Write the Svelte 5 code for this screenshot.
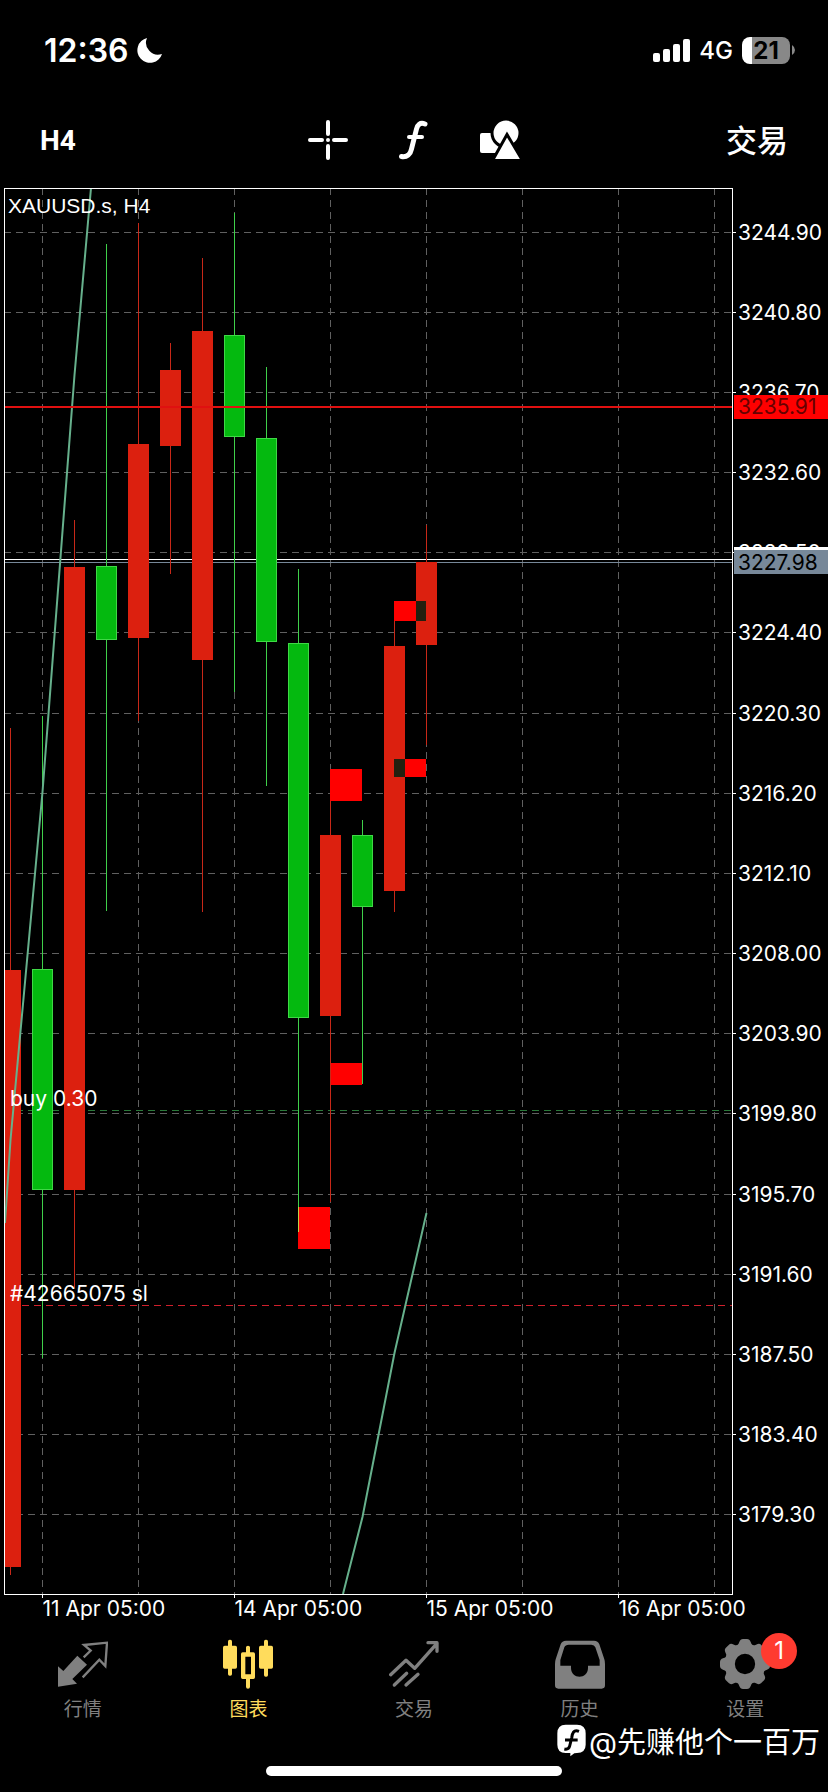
<script>
  const W = 828, H = 1450;
  const plot = { left: 4, right: 732, top: 8, bottom: 1414 };
  const bodyW = 21;

  const prices = Array.from({ length: 17 }, (_, i) => ({
    label: (3244.9 - i * 4.1).toFixed(2),
    y: Math.floor(52 + i * 80.17) + 0.5
  }));

  const times = [
    { x: 42.5, label: '11 Apr 05:00' },
    { x: 138.5 },
    { x: 234.5, label: '14 Apr 05:00' },
    { x: 330.5 },
    { x: 426.5, label: '15 Apr 05:00' },
    { x: 522.5 },
    { x: 618.5, label: '16 Apr 05:00' },
    { x: 714.5 }
  ];

  // wick top, body top, body bottom, wick bottom
  const candles = [
    { up: false, y: [548, 790, 1387, 1395] },
    { up: true, y: [536, 789, 1010, 1178] },
    { up: false, y: [340, 387, 1010, 1108] },
    { up: true, y: [64, 386, 460, 731] },
    { up: false, y: [43, 264, 458, 541] },
    { up: false, y: [163, 190, 266, 394] },
    { up: false, y: [78, 151, 480, 732] },
    { up: true, y: [33, 155, 257, 512] },
    { up: true, y: [187, 258, 462, 606] },
    { up: true, y: [389, 463, 838, 1052] },
    { up: false, y: [621, 655, 836, 1022] },
    { up: true, y: [640, 655, 727, 904] },
    { up: false, y: [441, 466, 711, 732] },
    { up: false, y: [345, 382, 465, 565] }
  ];

  const zones = [
    { x: 394, y: 421, w: 32, h: 20 },
    { x: 394, y: 579, w: 32, h: 18 },
    { x: 330, y: 589, w: 32, h: 32 },
    { x: 331, y: 883, w: 31, h: 22 },
    { x: 298, y: 1027, w: 32, h: 42 }
  ];

  const tabs = [
    { id: 'quotes', label: '行情' },
    { id: 'chart', label: '图表' },
    { id: 'trade', label: '交易' },
    { id: 'history', label: '历史' },
    { id: 'settings', label: '设置', badge: 1 }
  ];

  let active = $state('chart');

  function candleX(i) {
    return 10.5 + i * 32;
  }

  const teeth = [0, 45, 90, 135, 180, 225, 270, 315];
</script>

<main class="app">
  <header class="status">
    <div class="clock">
      <span>12:36</span>
      <svg width="26" height="26" viewBox="0 0 26 26" aria-hidden="true">
        <path d="M10 1A12.6 12.6 0 1 0 25 17A12 12 0 0 1 10 1Z" fill="#fff" />
      </svg>
    </div>
    <div class="signal">
      <svg width="38" height="24" viewBox="0 0 38 24" fill="#fff" aria-hidden="true">
        <rect x="0" y="15" width="7" height="9" rx="2" />
        <rect x="10" y="11" width="7" height="13" rx="2" />
        <rect x="20" y="6" width="7" height="18" rx="2" />
        <rect x="30" y="1" width="7" height="23" rx="2" />
      </svg>
      <span class="network">4G</span>
      <div class="battery"><span>21</span></div>
      <svg class="nub" width="3" height="10" viewBox="0 0 3 10" aria-hidden="true">
        <path d="M0 0Q3 2 3 5Q3 8 0 10Z" fill="#888" />
      </svg>
    </div>
  </header>

  <div class="toolbar">
    <button class="period">H4</button>
    <div class="tools">
      <button aria-label="十字光标">
        <svg width="40" height="40" viewBox="0 0 40 40" stroke="#fff" stroke-width="4" stroke-linecap="round" aria-hidden="true">
          <path d="M2 20H14M26 20H38M20 2V14M20 26V38" />
          <circle cx="20" cy="20" r="2" fill="#fff" stroke="none" />
        </svg>
      </button>
      <button aria-label="指标">
        <svg width="40" height="40" viewBox="0 0 40 40" fill="none" stroke="#fff" stroke-width="5" stroke-linecap="round" aria-hidden="true">
          <path d="M31 4C26 2 23.500 5 22.500 9L17.500 29C16.500 34 13 37.500 7.500 36.500" />
          <path d="M15 17H28" stroke-width="4" />
        </svg>
      </button>
      <button aria-label="图形">
        <svg width="40" height="40" viewBox="0 0 40 40" fill="#fff" aria-hidden="true">
          <rect x="0" y="13" width="20" height="20" rx="2" />
          <circle cx="26" cy="13" r="14" stroke="#000" stroke-width="3" />
          <path d="M27 14.500L12.500 40.500H42.500Z" stroke="#000" stroke-width="3" />
        </svg>
      </button>
    </div>
    <button class="order">交易</button>
  </div>

  <svg class="chart" viewBox="0 0 {W} {H}" role="img" aria-label="XAUUSD.s, H4">
    <clipPath id="plot-area">
      <rect x={plot.left} y={plot.top} width={plot.right - plot.left} height={plot.bottom - plot.top} />
    </clipPath>

    <g class="grid">
      {#each prices as p}
        <line x1={plot.left} y1={p.y} x2={plot.right} y2={p.y} />
      {/each}
      {#each times as t}
        <line x1={t.x} y1={plot.top} x2={t.x} y2={plot.bottom} />
      {/each}
    </g>

    <line class="level buy" x1="10" y1="930.500" x2={plot.right} y2="930.500" />
    <line class="level stop" x1="10" y1="1125.500" x2={plot.right} y2="1125.500" />
    <line x1={plot.left} y1="379.500" x2={plot.right} y2="379.500" stroke="#fff" />
    <line x1={plot.left} y1="382.500" x2={plot.right} y2="382.500" stroke="#778899" />

    <g clip-path="url(#plot-area)">
      {#each candles as c, i}
        <g class={c.up ? 'up' : 'down'}>
          <line x1={candleX(i)} y1={c.y[0]} x2={candleX(i)} y2={c.y[3]} />
          <rect
            x={candleX(i) - bodyW / 2 + 0.5}
            y={c.y[1] + 0.5}
            width={bodyW - 1}
            height={c.y[2] - c.y[1] - 1}
          />
        </g>
      {/each}
      {#each zones as z}
        <rect class="zone" x={z.x} y={z.y} width={z.w} height={z.h} />
      {/each}
      <polyline class="ma" points="5,1043 10.500,960 42.500,612 74.500,195 91,8" />
      <polyline class="ma" points="343,1414 362.500,1337 394.500,1173 426.500,1033" />
      <rect class="ask" x={plot.left} y="226" width={plot.right - plot.left} height="2" />
    </g>

    <rect class="frame" x="4.500" y="8.500" width="728" height="1406" />

    {#each prices as p}
      <line x1={plot.right} y1={p.y} x2={plot.right + 4} y2={p.y} stroke="#fff" />
      <text x="738" y={p.y + 7}>{p.label}</text>
    {/each}
    {#each times as t}
      {#if t.label}
        <line x1={t.x} y1={plot.bottom} x2={t.x} y2={plot.bottom + 4} stroke="#fff" />
        <text x={t.x} y="1436">{t.label}</text>
      {/if}
    {/each}

    <rect x="734" y="215" width="94" height="24" fill="#f00" />
    <text x="738" y="234" class="ask-price">3235.91</text>
    <rect x="734" y="367" width="94" height="24" fill="#fff" />
    <rect x="734" y="370" width="94" height="24" fill="#778899" />
    <text x="738" y="390" class="bid-price">3227.98</text>

    <text class="symbol" x="8" y="33">XAUUSD.s, H4</text>
    <text x="10" y="926">buy 0.30</text>
    <text x="10" y="1121">#42665075 sl</text>
  </svg>

  <nav class="tabs">
    {#each tabs as tab}
      <button class:active={active === tab.id} onclick={() => (active = tab.id)}>
        <span class="icon">
          {#if tab.id === 'quotes'}
            <svg viewBox="174 175 150 150" aria-hidden="true">
              <path d="M174 257L190 271L232 225L261 252L217 295L231 309L174 318Z" fill="currentColor" />
              <path d="M251 230L272 210L252 193L321 186L316 256L298 237L248 290" fill="none" stroke="currentColor" stroke-width="7" />
            </svg>
          {:else if tab.id === 'chart'}
            <svg viewBox="672 175 150 150" fill="currentColor" aria-hidden="true">
              <rect x="672" y="195" width="42" height="69" rx="5" />
              <rect x="687" y="177" width="12" height="108" rx="5" />
              <path d="M741 215V200Q741 195 747 195Q753 195 753 200V215H763Q768 215 768 220V290Q768 295 763 295H753V318Q753 324 747 324Q741 324 741 318V295H731Q726 295 726 290V220Q726 215 731 215ZM739 228V281H756V228Z" fill-rule="evenodd" />
              <rect x="780" y="195" width="42" height="69" rx="5" />
              <rect x="795" y="177" width="12" height="111" rx="5" />
            </svg>
          {:else if tab.id === 'trade'}
            <svg viewBox="1165 175 150 150" fill="none" stroke="currentColor" stroke-width="10" stroke-linecap="round" stroke-linejoin="round" aria-hidden="true">
              <path d="M1170 282L1216 239L1242 263L1309 188M1282 186H1309V212" />
              <path d="M1181 313L1218 278M1216 313L1252 281" />
            </svg>
          {:else if tab.id === 'history'}
            <svg viewBox="420 175 150 150" aria-hidden="true">
              <path d="M453 180H537Q549 180 553 191L568 236Q570 242 570 250V314Q570 324 560 324H430Q420 324 420 314V250Q420 242 422 236L437 191Q441 180 453 180ZM461 192Q451 192 448 200L436 238V255H468V262C468 297 519 297 519 262V255H554V238L541 200Q538 192 529 192Z" fill="currentColor" fill-rule="evenodd" />
            </svg>
          {:else}
            <svg viewBox="-75 -75 150 150" aria-hidden="true">
              <circle r="46" fill="none" stroke="currentColor" stroke-width="31" />
              {#each teeth as a}
                <path d="M-25 -54Q-19 -58 -17 -66Q-14 -75 -6 -75H6Q14 -75 17 -66Q19 -58 25 -54Z" fill="currentColor" transform="rotate({a})" />
              {/each}
            </svg>
          {/if}
          {#if tab.badge}<span class="badge">{tab.badge}</span>{/if}
        </span>
        <span class="label">{tab.label}</span>
      </button>
    {/each}
  </nav>

  <footer>
    <div class="author">
      <svg width="29" height="33" viewBox="0 0 87 99" aria-hidden="true">
        <path d="M26 2H60Q86 2 86 28V62Q86 86 60 87L52 88L40 97V87H26Q1 87 1 62V28Q1 2 26 2Z" fill="#fff" />
        <path d="M66 22C50 16 46 26 44 42L38 66Q35 78 22 75M24 48H62" fill="none" stroke="#000" stroke-width="9" />
      </svg>
      <span>@先赚他个一百万</span>
    </div>
    <div class="home"></div>
  </footer>
</main>

<style>
  :global(body) {
    background: #000;
  }
  .app {
    background: #000;
    color: #fff;
    font-family: Inter, "Noto Sans CJK SC", sans-serif;
    overflow: hidden;
  }
  button {
    background: none;
    border: 0;
    padding: 0;
    color: inherit;
    font: inherit;
    cursor: pointer;
  }
  svg {
    display: block;
  }
  .status {
    display: flex;
    align-items: center;
    justify-content: space-between;
    height: 100px;
    padding: 0 33px 0 44px;
  }
  .clock {
    display: flex;
    align-items: center;
    gap: 8px;
    font-size: 32px;
    font-weight: 600;
  }
  .signal {
    display: flex;
    align-items: center;
  }
  .network {
    margin: 0 9px 0 8px;
    font-size: 24px;
    font-weight: 500;
  }
  .battery {
    width: 48px;
    height: 27px;
    border-radius: 8px;
    background: linear-gradient(to right, #fff 10px, #888 10px);
    color: #000;
    font-size: 24px;
    font-weight: 700;
    line-height: 27px;
    text-align: center;
  }
  .nub {
    margin-left: 2px;
  }
  .toolbar {
    display: grid;
    grid-template-columns: 1fr auto 1fr;
    align-items: center;
    height: 80px;
    padding: 0 40px;
  }
  .period {
    justify-self: start;
    font: bold 28px Roboto, sans-serif;
  }
  .tools {
    display: flex;
    gap: 46px;
  }
  .order {
    justify-self: end;
    padding-bottom: 4px;
    font-size: 31px;
    font-weight: 500;
  }
  .chart {
    width: 100%;
    height: auto;
  }
  .chart text {
    fill: #fff;
    font-size: 21px;
  }
  .chart .symbol {
    font-family: "Liberation Sans", Arial, sans-serif;
  }
  .chart .ask-price {
    fill: #600;
  }
  .chart .bid-price {
    fill: #000;
  }
  .grid line {
    stroke: #606060;
    stroke-dasharray: 7 5;
  }
  .level {
    stroke-dasharray: 7 5;
  }
  .buy {
    stroke: #2a7a3a;
    stroke-dashoffset: 6;
  }
  .stop {
    stroke: #d0202c;
  }
  .up line {
    stroke: #3fd04a;
  }
  .up rect {
    fill: #04b90f;
    stroke: #3fd846;
  }
  .down line {
    stroke: #c82818;
  }
  .down rect {
    fill: #dc200f;
    stroke: #dc200f;
  }
  .zone {
    fill: #f00;
    mix-blend-mode: difference;
  }
  .ma {
    fill: none;
    stroke: #66b08c;
    stroke-width: 2;
  }
  .ask {
    fill: #e01010;
  }
  .frame {
    fill: none;
    stroke: #fff;
  }
  .tabs {
    display: grid;
    grid-template-columns: repeat(5, 1fr);
    padding-top: 9px;
    color: #808080;
  }
  .tabs button {
    display: flex;
    flex-direction: column;
    align-items: center;
    gap: 9px;
  }
  .tabs .active {
    color: #ffdc5c;
  }
  .icon {
    position: relative;
    width: 50px;
    height: 50px;
  }
  .badge {
    position: absolute;
    top: -6px;
    left: 41px;
    width: 36px;
    height: 36px;
    border-radius: 50%;
    background: #ff3b30;
    color: #fff;
    font-size: 24px;
    line-height: 36px;
    text-align: center;
  }
  .label {
    font-size: 19px;
    line-height: 24px;
  }
  footer {
    display: flex;
    flex-direction: column;
    gap: 8px;
    padding-bottom: 16px;
  }
  .author {
    display: flex;
    align-items: center;
    justify-content: flex-end;
    gap: 3px;
    height: 36px;
    padding-right: 8px;
    font-size: 29px;
  }
  .home {
    align-self: center;
    width: 296px;
    height: 10px;
    border-radius: 5px;
    background: #fff;
  }
</style>
